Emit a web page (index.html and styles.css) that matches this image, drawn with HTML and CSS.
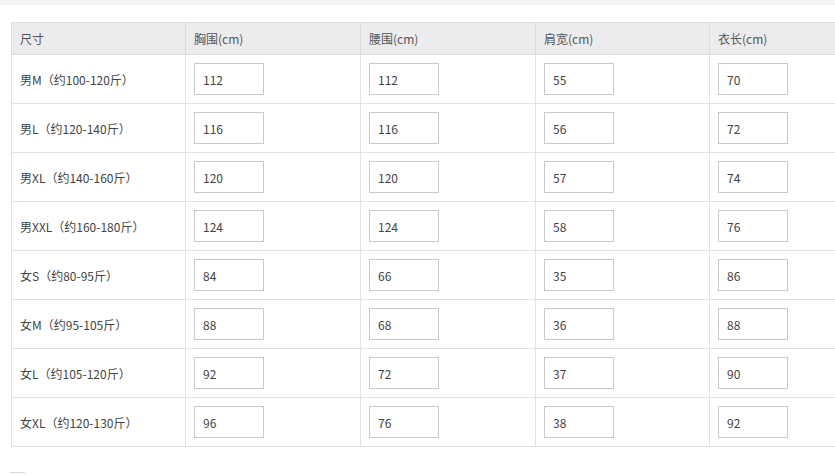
FILE: index.html
```html
<!DOCTYPE html>
<html lang="zh">
<head>
<meta charset="utf-8">
<link rel="stylesheet" href="styles.css">
</head>
<body>
<div class="topbar"></div>
<div class="wrap">
<table class="size-table">
  <colgroup>
    <col class="c1"><col class="c2"><col class="c2"><col class="c1"><col class="c2">
  </colgroup>
  <thead>
    <tr><th>尺寸</th><th>胸围(cm)</th><th>腰围(cm)</th><th>肩宽(cm)</th><th>衣长(cm)</th></tr>
  </thead>
  <tbody>
    <tr><td>男M（约100-120斤）</td><td><span class="box">112</span></td><td><span class="box">112</span></td><td><span class="box">55</span></td><td><span class="box">70</span></td></tr>
    <tr><td>男L（约120-140斤）</td><td><span class="box">116</span></td><td><span class="box">116</span></td><td><span class="box">56</span></td><td><span class="box">72</span></td></tr>
    <tr><td>男XL（约140-160斤）</td><td><span class="box">120</span></td><td><span class="box">120</span></td><td><span class="box">57</span></td><td><span class="box">74</span></td></tr>
    <tr><td>男XXL（约160-180斤）</td><td><span class="box">124</span></td><td><span class="box">124</span></td><td><span class="box">58</span></td><td><span class="box">76</span></td></tr>
    <tr><td>女S（约80-95斤）</td><td><span class="box">84</span></td><td><span class="box">66</span></td><td><span class="box">35</span></td><td><span class="box">86</span></td></tr>
    <tr><td>女M（约95-105斤）</td><td><span class="box">88</span></td><td><span class="box">68</span></td><td><span class="box">36</span></td><td><span class="box">88</span></td></tr>
    <tr><td>女L（约105-120斤）</td><td><span class="box">92</span></td><td><span class="box">72</span></td><td><span class="box">37</span></td><td><span class="box">90</span></td></tr>
    <tr><td>女XL（约120-130斤）</td><td><span class="box">96</span></td><td><span class="box">76</span></td><td><span class="box">38</span></td><td><span class="box">92</span></td></tr>
  </tbody>
</table>
</div>
<div class="check"></div>
</body>
</html>
```
FILE: styles.css
```css
html, body {
  margin: 0;
  padding: 0;
  background: #ffffff;
  overflow: hidden;
  width: 835px;
  height: 475px;
}
body {
  font-family: "Noto Sans CJK SC", "Noto Sans", sans-serif;
  font-size: 12px;
  color: #444;
}
.topbar {
  height: 5px;
  background: #f4f4f5;
}
.wrap {
  box-sizing: border-box;
  padding: 17px 0 0 11px;
  width: 835px;
  overflow: hidden;
}
.size-table {
  border-collapse: collapse;
  table-layout: fixed;
  width: 874px;
}
.c1 { width: 174px; }
.c2 { width: 175px; }
.size-table th,
.size-table td {
  text-align: left;
  padding: 0 8px;
  border: 1px solid #e2e2e4;
  vertical-align: middle;
  white-space: nowrap;
}
.size-table th {
  height: 31px;
  background: #ececef;
  font-weight: normal;
  color: #555;
  border-color: #dcdcdf;
}
.size-table td {
  height: 48px;
  color: #444;
}
.box {
  display: flex;
  align-items: center;
  box-sizing: border-box;
  width: 70px;
  height: 32px;
  padding-left: 8px;
  border: 1px solid #c9c9c9;
  color: #444;
  background: #fff;
}
.check {
  margin: 25px 0 0 10px;
  width: 15px;
  height: 3px;
  border-top: 1px solid #d8d8d8;
}
```
